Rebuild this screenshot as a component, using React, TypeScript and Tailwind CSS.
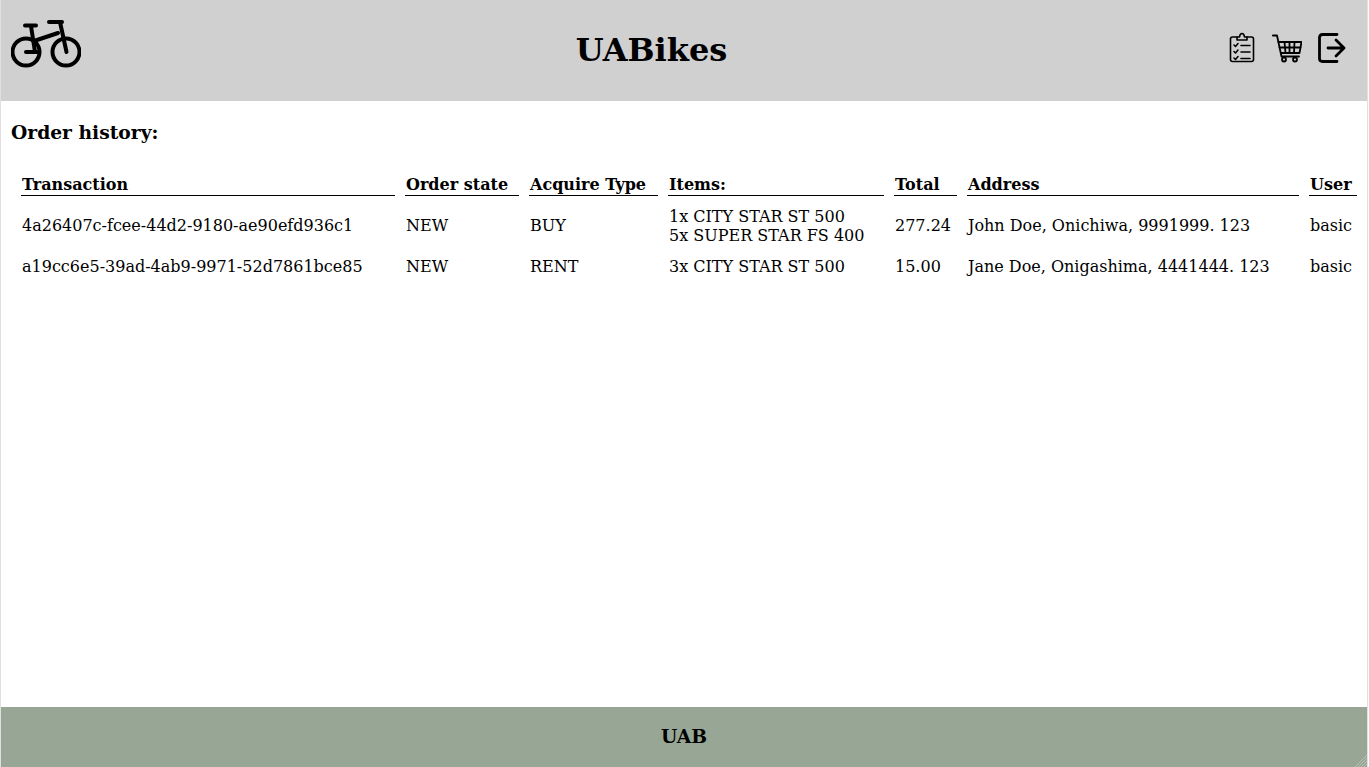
import React from 'react';

const orders = [
   {
      id: '4a26407c-fcee-44d2-9180-ae90efd936c1',
      state: 'NEW',
      type: 'BUY',
      items: ['1x CITY STAR ST 500', '5x SUPER STAR FS 400'],
      total: '277.24',
      address: 'John Doe, Onichiwa, 9991999. 123',
      user: 'basic',
   },
   {
      id: 'a19cc6e5-39ad-4ab9-9971-52d7861bce85',
      state: 'NEW',
      type: 'RENT',
      items: ['3x CITY STAR ST 500'],
      total: '15.00',
      address: 'Jane Doe, Onigashima, 4441444. 123',
      user: 'basic',
   },
];

const columns = [
   { name: 'Transaction', width: 'w-[374px]' },
   { name: 'Order state', width: 'w-[114px]' },
   { name: 'Acquire Type', width: 'w-[129px]' },
   { name: 'Items:', width: 'w-[216px]' },
   { name: 'Total', width: 'w-[63px]' },
   { name: 'Address', width: 'w-[332px]' },
   { name: 'User', width: 'w-[48px]' },
];

const BikeIcon = () => (
   <svg width="70" height="50" viewBox="0 0 70 50" fill="none" stroke="black" strokeWidth="4" strokeLinecap="round" strokeLinejoin="round">
      <circle cx="15" cy="33" r="13.5" />
      <circle cx="55" cy="33" r="13.5" />
      <path d="M15 33H26" />
      <path d="M55.5 33L49 3" />
      <path d="M24 33L20 7" />
      <path d="M23 22L47 14" />
      <path d="M14 6.5H25" />
      <path d="M38 3H51" />
   </svg>
);

const ClipboardIcon = () => (
   <svg className="mr-px" width="26" height="32" viewBox="0 0 26 32" fill="none" stroke="black" strokeWidth="1.6" strokeLinecap="round" strokeLinejoin="round">
      <path d="M8 5H3.5Q1.5 5 1.5 7V27.5Q1.5 29.5 3.5 29.5H22.5Q24.5 29.5 24.5 27.5V7Q24.5 5 22.5 5H18" />
      <path d="M8 8V5H10.5Q11 1.5 13 1.5Q15 1.5 15.5 5H18V8Z" />
      <path d="M5 13L6.5 14.5L9 11.5M5 19.5L6.5 21L9 18M5 26L6.5 27.5L9 24.5" />
      <path d="M12 13.5H21M12 20H21M12 26.5H21" />
   </svg>
);

const CartIcon = () => (
   <svg width="30" height="29" viewBox="0 0 30 29" fill="none" stroke="black" strokeWidth="1.8" strokeLinecap="round" strokeLinejoin="round">
      <path d="M0.8 1.5H5L9.5 22.5H27" />
      <path d="M6.5 8H29.5L27.5 19H8.8" />
      <path d="M12.5 8L13.5 19M17.5 8V19M22.5 8L22 19M7.5 13.5H28.5" />
      <circle cx="12" cy="25.5" r="2" />
      <circle cx="23" cy="25.5" r="2" />
   </svg>
);

const LogoutIcon = () => (
   <svg width="28" height="30" viewBox="0 0 28 30" fill="none" stroke="black" strokeWidth="2.8" strokeLinecap="round" strokeLinejoin="round">
      <path d="M19 1.5H4.5Q1.5 1.5 1.5 4.5V25.5Q1.5 28.5 4.5 28.5H19" />
      <path d="M10 15H26M18 7L26 15L18 23" />
   </svg>
);

const ResizeHandle = () => (
   <svg className="absolute right-0 bottom-0" width="12" height="12" viewBox="0 0 12 12" stroke="#b5bfb3" strokeWidth="1">
      <path d="M0 12L12 0M3 12L12 3M6 12L12 6M9 12L12 9" />
   </svg>
);

export default function App() {
   return (
      <div className="flex flex-col w-[1368px] h-[767px] bg-white text-black border-x border-[#e0e0e0] font-['DejaVu_Serif',serif]">
         <header className="flex items-center justify-between h-[101px] bg-[#d0d0d0] pl-[10px] pr-[21px]">
            <div className="pb-[13px]">
               <BikeIcon />
            </div>
            <h1 className="mr-[7px] pb-[2px] text-[32px] font-bold leading-none">UABikes</h1>
            <div className="flex items-center gap-[16px] pb-[5px]">
               <ClipboardIcon />
               <CartIcon />
               <LogoutIcon />
            </div>
         </header>
         <main className="flex-1 px-[10px]">
            <h3 className="mt-[20px] text-[18.72px] font-bold leading-[22px]">Order history:</h3>
            <table className="mt-[20.75px] w-[1356px] border-separate border-spacing-[10px] table-fixed text-base leading-[normal]">
               <thead>
                  <tr>
                     {columns.map((c) => (
                        <th key={c.name} className={`${c.width} p-px text-left font-bold border-b border-black whitespace-nowrap`}>
                           {c.name}
                        </th>
                     ))}
                  </tr>
               </thead>
               <tbody>
                  {orders.map((o) => (
                     <tr key={o.id}>
                        <td className="p-px whitespace-nowrap">{o.id}</td>
                        <td className="p-px">{o.state}</td>
                        <td className="p-px">{o.type}</td>
                        <td className="p-px whitespace-nowrap">
                           {o.items.map((item) => (
                              <div key={item}>{item}</div>
                           ))}
                        </td>
                        <td className="p-px">{o.total}</td>
                        <td className="p-px whitespace-nowrap">{o.address}</td>
                        <td className="p-px">{o.user}</td>
                     </tr>
                  ))}
               </tbody>
            </table>
         </main>
         <footer className="relative flex items-center justify-center h-[60px] pb-[2px] bg-[#98a795] font-bold text-[18.72px]">
            UAB
            <ResizeHandle />
         </footer>
      </div>
   );
}
